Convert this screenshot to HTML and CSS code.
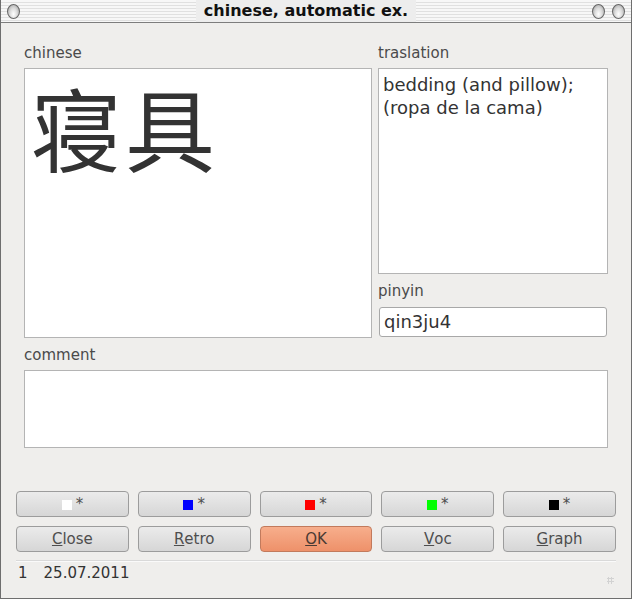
FILE: index.html
```html
<html>
<head>
<title>chinese, automatic ex.</title>
<link rel="stylesheet" href="styles.css">
</head>
<body>

<div class="window">
	<div class="titlebar">
		<span class="knob"></span>
		<div class="stripes"></div>
		<div class="title">chinese, automatic ex.</div>
		<div class="stripes"></div>
		<span class="knob"></span>
		<span class="knob"></span>
	</div>

	<div class="content">
		<div class="fields">
			<div class="column">
				<div class="label">chinese</div>
				<div class="box hanzi">寝具</div>
			</div>
			<div class="column">
				<div class="label">traslation</div>
				<div class="box translation">bedding (and pillow);<br>(ropa de la cama)</div>
				<div class="label pinyin-label">pinyin</div>
				<div class="line-input">qin3ju4</div>
			</div>
		</div>
		<div class="label comment-label">comment</div>
		<div class="box comment"></div>
	</div>

	<div class="buttons">
		<button><span class="swatch white"></span>*</button>
		<button><span class="swatch blue"></span>*</button>
		<button><span class="swatch red"></span>*</button>
		<button><span class="swatch green"></span>*</button>
		<button><span class="swatch black"></span>*</button>
		<button><u>C</u>lose</button>
		<button><u>R</u>etro</button>
		<button class="default"><u>O</u>K</button>
		<button><u>V</u>oc</button>
		<button><u>G</u>raph</button>
	</div>

	<div class="status">
		<span>1</span>
		<span>25.07.2011</span>
		<span class="grip"></span>
	</div>
</div>

</body>
</html>
```

FILE: styles.css
```css
html, body {
	margin: 0px;
	padding: 0px;
	background-color: #efeeec;
	font-family: "DejaVu Sans", sans-serif;
}
.window {
	width: 632px;
	height: 599px;
	box-sizing: border-box;
	border: 1px solid #6e6e6e;
	border-top: none;
	background-color: #efeeec;
	display: flex;
	flex-direction: column;
}

/* title bar */
.titlebar {
	height: 22px;
	border-bottom: 1px solid #7d7d7d;
	background: repeating-linear-gradient(to bottom, #f7f7f7 0px, #f7f7f7 2px, #e0e0e0 2px, #e0e0e0 3px);
	display: flex;
	align-items: center;
	padding: 0 6px;
	gap: 5px;
}
.stripes {
	flex: 1;
}
.title {
	font-size: 16px;
	font-weight: bold;
	color: #111;
	padding: 0 8px;
	background-color: #ededed;
	line-height: 22px;
}
.knob {
	width: 13px;
	height: 15px;
	border-radius: 50%;
	border: 1px solid #666;
	background: radial-gradient(ellipse at 50% 70%, #ffffff 0%, #dcdcdc 45%, #9a9a9a 100%);
	box-sizing: border-box;
}
.knob + .knob {
	margin-left: 2px;
}

/* fields */
.content {
	padding: 20px 23px 0 23px;
}
.fields {
	display: grid;
	grid-template-columns: 348px 1fr;
	column-gap: 6px;
}
.column {
	display: flex;
	flex-direction: column;
}
.label {
	font-size: 15px;
	line-height: 18px;
	color: #4a4a4a;
	margin-top: 1px;
	margin-bottom: 6px;
}
.box {
	background-color: #ffffff;
	border: 1px solid #b4b4b4;
	box-sizing: border-box;
}
.hanzi {
	height: 270px;
	font-family: "Noto Sans CJK SC", sans-serif;
	font-size: 90px;
	line-height: 90px;
	color: #333;
	padding: 12px 0 0 6px;
	letter-spacing: 4px;
}
.translation {
	height: 206px;
	font-size: 18px;
	line-height: 23px;
	color: #333;
	padding: 4px 4px;
}
.pinyin-label {
	margin-top: 8px;
	margin-bottom: 7px;
}
.line-input {
	height: 30px;
	box-sizing: border-box;
	margin: 0 1px;
	border: 1px solid #a8a8a8;
	border-radius: 3px;
	background-color: #ffffff;
	font-size: 18px;
	line-height: 28px;
	color: #333;
	padding: 0 4px;
}
.comment-label {
	margin-top: 8px;
}
.comment {
	height: 78px;
}

/* buttons */
.buttons {
	display: grid;
	grid-template-columns: repeat(5, 1fr);
	gap: 9px;
	padding: 0 15px;
	margin-top: 43px;
}
button {
	height: 26px;
	font-family: "DejaVu Sans", sans-serif;
	font-size: 15px;
	color: #4e4e4e;
	border: 1px solid #9c9c9c;
	border-radius: 4px;
	background: linear-gradient(to bottom, #ebebeb, #d6d6d6);
	padding: 0;
	display: flex;
	align-items: center;
	justify-content: center;
}
button.default {
	border-color: #c27a5c;
	background: linear-gradient(to bottom, #f7ae8c, #ee916a);
	color: #4a3a33;
}
.swatch {
	width: 10px;
	height: 10px;
	margin-right: 4px;
	margin-top: 2px;
}
.white { background-color: #ffffff; }
.blue { background-color: #0000ff; }
.red { background-color: #ff0000; }
.green { background-color: #00ff00; }
.black { background-color: #000000; }

/* status */
.status {
	margin: 8px 15px 0 15px;
	border-top: 1px solid #d9d9d9;
	box-shadow: inset 0 1px 0 #fafafa;
	padding: 3px 2px 0 2px;
	font-size: 15px;
	line-height: 18px;
	color: #333;
	display: flex;
	gap: 16px;
}
.grip {
	margin-left: auto;
	margin-top: 13px;
	width: 7px;
	height: 7px;
	background: radial-gradient(circle, #d2d2d2 1px, transparent 1.2px);
	background-size: 3px 3px;
}
```
